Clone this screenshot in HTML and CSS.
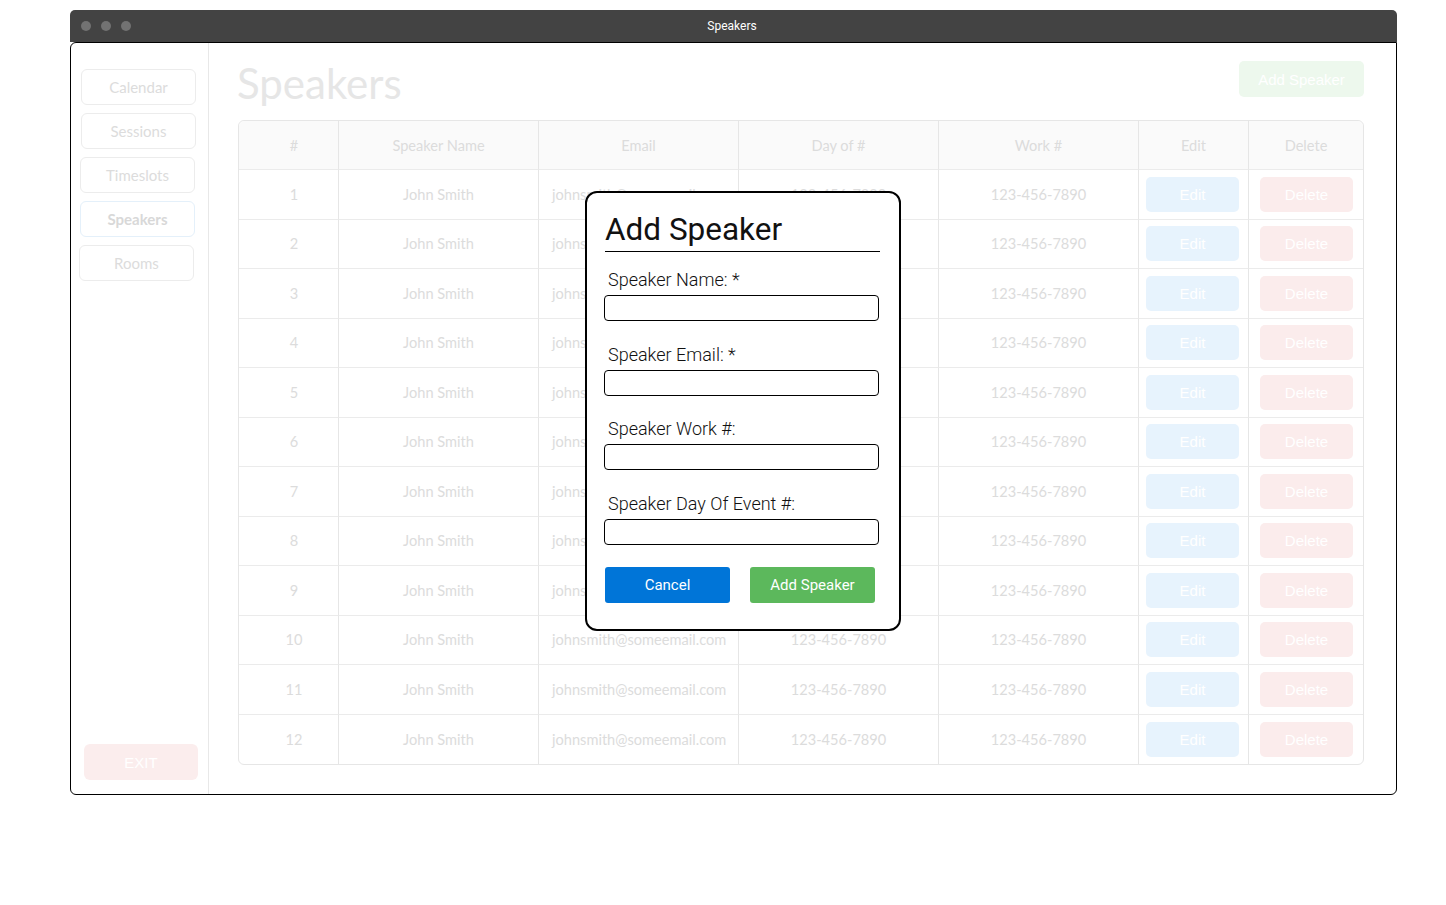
FILE: index.html
```html
<!DOCTYPE html>
<html>
<head>
<meta charset="utf-8">
<title>Speakers</title>
<link rel="stylesheet" href="styles.css">
</head>
<body>
<div class="window">
  <div class="titlebar">
    <div class="dots"><span class="dot"></span><span class="dot"></span><span class="dot"></span></div>
    <div class="title">Speakers</div>
  </div>
  <div class="win-body">
    <aside class="sidebar">
      <nav class="nav">
        <a class="nav-btn">Calendar</a>
        <a class="nav-btn">Sessions</a>
        <a class="nav-btn nav-shift">Timeslots</a>
        <a class="nav-btn nav-shift active">Speakers</a>
        <a class="nav-btn nav-shift2">Rooms</a>
      </nav>
      <button class="exit-btn">EXIT</button>
    </aside>
    <main class="main">
      <header class="page-header">
        <h1 class="page-title">Speakers</h1>
        <button class="add-btn">Add Speaker</button>
      </header>
      <table class="table">
        <colgroup>
          <col class="c-num"><col class="c-wide"><col class="c-wide"><col class="c-wide"><col class="c-wide"><col class="c-edit"><col>
        </colgroup>
        <thead>
          <tr><th class="num">#</th><th>Speaker Name</th><th>Email</th><th>Day of #</th><th>Work #</th><th>Edit</th><th>Delete</th></tr>
        </thead>
        <tbody id="rows"></tbody>
      </table>
    </main>
  </div>
</div>

<div class="modal">
  <h2 class="modal-title">Add Speaker</h2>
  <div class="fields">
    <div class="field"><label class="field-label">Speaker Name: *</label><input class="field-input" type="text"></div>
    <div class="field"><label class="field-label">Speaker Email: *</label><input class="field-input" type="text"></div>
    <div class="field"><label class="field-label">Speaker Work #:</label><input class="field-input" type="text"></div>
    <div class="field"><label class="field-label">Speaker Day Of Event #:</label><input class="field-input" type="text"></div>
  </div>
  <div class="modal-actions">
    <button class="btn btn-cancel">Cancel</button>
    <button class="btn btn-add">Add Speaker</button>
  </div>
</div>
<script src="script.js"></script>
</body>
</html>
```

FILE: script.js
```js
const tbody = document.getElementById('rows');
let html = '';
for (let i = 1; i <= 12; i++) {
  html += '<tr><td class="num">' + i + '</td><td>John Smith</td><td class="email">johnsmith@someemail.com</td>' +
    '<td>123-456-7890</td><td>123-456-7890</td>' +
    '<td><button class="row-btn edit">Edit</button></td>' +
    '<td><button class="row-btn del">Delete</button></td></tr>';
}
tbody.innerHTML = html;
```

FILE: styles.css
```css
* { box-sizing: border-box; }
html, body { margin: 0; padding: 0; background: #fff; }
body { width: 1446px; height: 905px; position: relative; font-family: "Lato", "Open Sans", sans-serif; }

.window { margin: 10px 0 0 70px; width: 1327px; }
.titlebar {
  height: 32px; background: #434343; border-radius: 5px 5px 0 0;
  display: flex; align-items: center; position: relative;
}
.dots { display: flex; gap: 10px; padding-left: 11px; }
.dot { width: 10px; height: 10px; border-radius: 50%; background: #727272; }
.title {
  position: absolute; left: 0; right: 0; text-align: center;
  font-family: "Roboto", sans-serif; font-size: 12px; color: #fff; margin-left: -3px;
}

.win-body {
  height: 753px; border: 1px solid #000; border-radius: 6px 0 6px 6px;
  display: flex; background: #fff;
}

.sidebar {
  width: 138px; border-right: 1px solid #e8e8e8;
  display: flex; flex-direction: column; padding: 26px 0 14px 10px;
}
.nav { display: flex; flex-direction: column; gap: 8px; }
.nav-btn {
  width: 115px; height: 36px; border: 1px solid #ececec; border-radius: 6px;
  display: flex; align-items: center; justify-content: center;
  color: #dcdcdc; font-size: 15px;
}
.nav-shift { margin-left: -1px; }
.nav-shift2 { margin-left: -2px; }
.nav-btn.active { font-weight: bold; border-color: #e4f0fa; color: #d8d8d8; }
.exit-btn {
  margin-top: auto; margin-left: 3px; width: 114px; height: 36px;
  border: none; border-radius: 6px; background: #fbeded; color: #fff;
  font-family: "Liberation Sans", Arial, sans-serif; font-size: 15px;
}

.main { flex: 1; padding: 15px 31px 0 29px; }
.page-header { display: flex; justify-content: space-between; align-items: flex-start; height: 62px; }
.page-title {
  margin: 0 0 0 -1px; font-size: 42px; line-height: 50px; font-weight: normal; color: #e6e6e6;
}
.add-btn {
  margin-top: 3px; margin-right: 1px; width: 125px; height: 36px; border: none; border-radius: 5px;
  background: #edf8ed; color: #fff; font-family: "Liberation Sans", Arial, sans-serif; font-size: 15px;
}

.table {
  width: 1126px; table-layout: fixed; border-collapse: separate; border-spacing: 0;
  border: 1px solid #e6e6e6; border-radius: 6px; font-size: 14.6px; color: #dcdcdc;
}
.c-num { width: 100px; }
.c-wide { width: 200px; }
.c-edit { width: 110px; }
.table th, .table td {
  padding: 0; text-align: center; border-right: 1px solid #e6e6e6; border-bottom: 1px solid #ebebeb;
  font-weight: normal;
}
.table th:last-child, .table td:last-child { border-right: none; }
.table tbody tr:last-child td { border-bottom: none; }
.table thead tr { height: 49px; }
.table thead th { background: #fafafa; }
.table thead th:first-child { border-top-left-radius: 6px; }
.table thead th:last-child { border-top-right-radius: 6px; }
.table tbody tr { height: 49.5px; }
.table .num { padding-left: 11px; }
.table td.email { text-align: left; padding-left: 13px; }
.row-btn {
  width: 93px; height: 35px; border: none; border-radius: 5px; color: #fff;
  font-family: "Liberation Sans", Arial, sans-serif; font-size: 15px; display: block;
}
.row-btn.edit { background: #e7f3fd; margin-left: 7px; }
.row-btn.del { background: #fbecec; margin-left: 11px; }

.modal {
  position: absolute; left: 585px; top: 191px; width: 316px;
  background: #fff; border: 2px solid #000; border-radius: 12px;
  padding: 18px 19px 26px 18px; font-family: "Roboto", sans-serif;
}
.modal-title {
  margin: 0; font-size: 31.5px; line-height: 37px; font-weight: normal; color: #111;
  padding-bottom: 3px; border-bottom: 1px solid #000;
}
.fields { display: flex; flex-direction: column; gap: 22.5px; margin-top: 17px; }
.field { display: flex; flex-direction: column; gap: 4px; }
.field-label { font-size: 18px; line-height: 22px; font-weight: 300; color: #111; padding-left: 3px; }
.field-input {
  width: 275px; height: 26px; margin-left: -1px; border: 1px solid #000; border-radius: 4px;
  background: #fff; outline: none;
}
.modal-actions { display: flex; gap: 20px; margin-top: 22.5px; }
.btn {
  width: 125px; height: 36px; border: none; border-radius: 3px; color: #fff;
  font-family: "Roboto", sans-serif; font-size: 15px;
}
.btn-cancel { background: #0075d8; }
.btn-add { background: #5cb85c; }
```
